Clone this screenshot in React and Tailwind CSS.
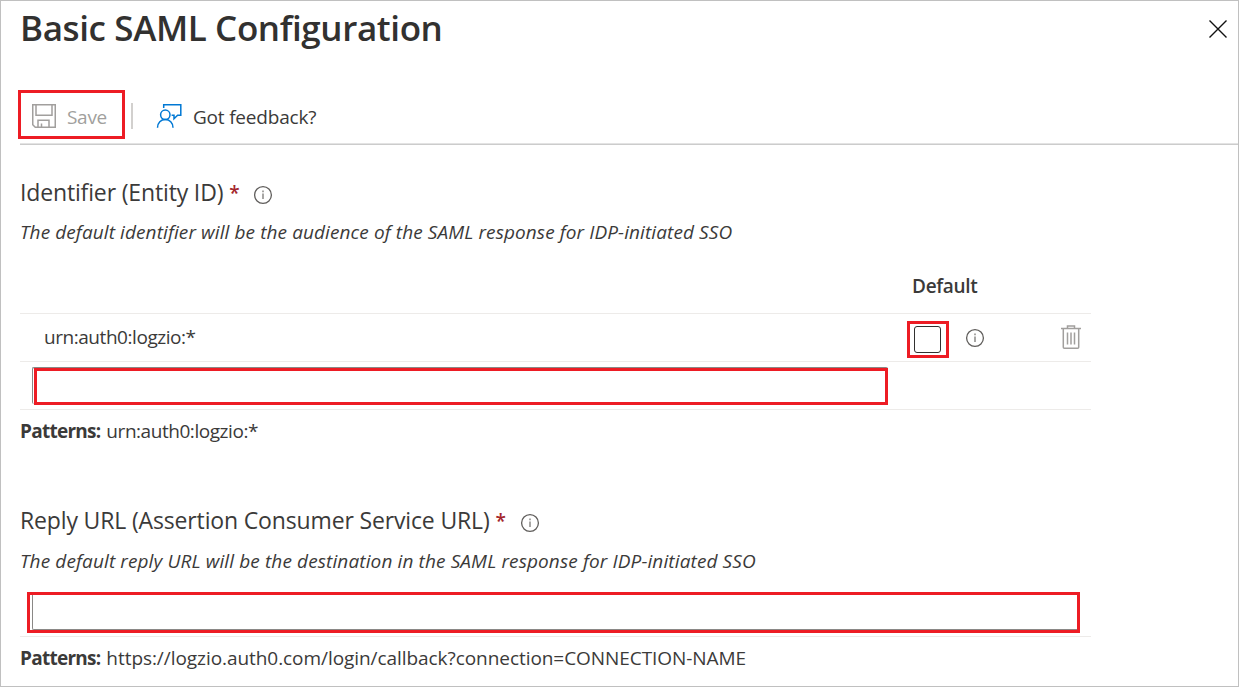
function InfoIcon({ className }) {
  return (
    <svg className={className} width="20" height="20" viewBox="0 0 20 20" fill="none">
      <circle cx="10" cy="10" r="8.4" stroke="#605e5c" strokeWidth="1.3" />
      <path d="M10 8.6V14" stroke="#8a8886" strokeWidth="1.5" />
      <path d="M10 5.6V7.2" stroke="#8a8886" strokeWidth="1.5" />
    </svg>
  );
}

function SaveIcon() {
  return (
    <svg className="mt-[2px] shrink-0" width="24" height="24" viewBox="0 0 24 24" fill="none" stroke="#a19f9d" strokeWidth="1.5">
      <path d="M0.75 0.75H23.25V23.25H3.25L0.75 20.75Z" />
      <path d="M4 1V11.25H20V1" />
      <path d="M6 23V16.25H17V23" />
      <path d="M9.5 23V19.5" />
    </svg>
  );
}

function FeedbackIcon() {
  return (
    <svg className="mt-[2px] shrink-0" width="26" height="26" viewBox="0 0 26 26" fill="none" stroke="#0078d4" strokeWidth="1.5">
      <path d="M7.7 5V1.7H24.8V12.3H21.6L18 15.8V12.3H15.6" />
      <circle cx="9.3" cy="11.8" r="4.7" />
      <path d="M1.5 24.8C1.5 19.8 5 16.6 9.3 16.6S17 19.8 17 24.8" />
    </svg>
  );
}

function TrashIcon() {
  return (
    <svg width="20" height="24" viewBox="0 0 20 24" fill="none" stroke="#a19f9d" strokeWidth="1.5">
      <path d="M0 3.5H20" />
      <path d="M6.5 3V0.9H13.5V3" />
      <path d="M2.3 4V22.2Q2.3 23.2 3.3 23.2H16.7Q17.7 23.2 17.7 22.2V4" />
      <path d="M6.5 7.5V19.5M10 7.5V19.5M13.5 7.5V19.5" />
    </svg>
  );
}

function CloseIcon() {
  return (
    <svg width="18" height="18" viewBox="0 0 18 18" stroke="#111" strokeWidth="1.4">
      <path d="M0.5 0.5L17.5 17.5M17.5 0.5L0.5 17.5" />
    </svg>
  );
}

function Heading({ children }) {
  return (
    <div className="flex h-[40px] items-center text-[23px] tracking-[-0.15px]">
      <span className="-mt-px">{children}</span>
      <span className="ml-[6px] w-[10px] text-[19px] font-semibold text-[#a4262c]">*</span>
      <InfoIcon className="mt-[3px] ml-[14px]" />
    </div>
  );
}

function Patterns({ children }) {
  return (
    <p className="flex h-[43px] items-center">
      <b className="mr-[6px] tracking-[-0.75px]">Patterns:</b>
      {children}
    </p>
  );
}

export default function App() {
  return (
    <main className="flex h-[687px] w-[1239px] flex-col overflow-hidden border border-[#c0c0c0] bg-white pl-[19px] font-['Open_Sans','Noto_Sans',sans-serif] text-[19px] whitespace-nowrap text-[#3b3a39]">
      <header className="flex h-[56px] items-center justify-between pr-[11px]">
        <h1 className="-mt-[2px] text-[35px] font-semibold tracking-[-0.39px] text-[#323130]">Basic SAML Configuration</h1>
        <button aria-label="Close"><CloseIcon /></button>
      </header>

      <div className="mt-[33px] flex h-[49px] items-center">
        <button className="-ml-[2px] flex h-[49px] w-[107px] shrink-0 items-center border-[3px] border-[#ed1c24] pl-[11px] text-[#a19f9d]">
          <SaveIcon />
          <span className="mt-[5px] ml-[11px] tracking-[-0.3px]">Save</span>
        </button>
        <div className="mt-[2px] ml-[6px] h-[26px] w-[2px] bg-[#d2d0ce]" />
        <button className="ml-[23px] flex items-center">
          <FeedbackIcon />
          <span className="mt-[5px] ml-[11px] tracking-[-0.2px]">Got feedback?</span>
        </button>
      </div>
      <div className="mt-[4px] h-[2px] shrink-0 border-t border-b border-t-[#e3e3e3] border-b-[#cccccc]" />

      <section className="mt-[28px]">
        <Heading>Identifier (Entity ID)</Heading>
        <p className="flex h-[38px] items-center tracking-[0.1px] italic">The default identifier will be the audience of the SAML response for IDP-initiated SSO</p>
        <div className="w-[1071px]">
          <div className="flex h-[63px] items-center border-b border-[#edebe9] pt-[9px] pl-[892px] font-semibold tracking-[-0.3px]">Default</div>
          <div className="flex h-[48px] items-center border-b border-[#edebe9] pl-[24px]">
            <span className="w-[863px] tracking-[-0.45px]">urn:auth0:logzio:*</span>
            <div className="mt-[3px] flex h-[37px] w-[42px] border-[3px] border-[#ed1c24] pt-[2px] pl-[4px]">
              <div className="h-[27px] w-[27px] rounded-[3px] border border-[#323130]" />
            </div>
            <InfoIcon className="ml-[16px]" />
            <button className="mb-[2px] ml-[76px]" aria-label="Delete"><TrashIcon /></button>
          </div>
          <div className="flex h-[48px] border-b border-[#edebe9] pt-[5px] pl-[12px]">
            <div className="h-[37px] w-[856px] rounded-[2px] border-t border-l border-[#8a8886] pl-px">
              <div className="h-[37px] w-[854px] border-[3px] border-[#ed1c24]" />
            </div>
          </div>
        </div>
        <Patterns><span className="tracking-[-0.45px]">urn:auth0:logzio:*</span></Patterns>
      </section>

      <section className="mt-[48px]">
        <Heading>Reply URL (Assertion Consumer Service URL)</Heading>
        <p className="flex h-[40px] items-center tracking-[0.12px] italic">The default reply URL will be the destination in the SAML response for IDP-initiated SSO</p>
        <div className="h-[56px] w-[1071px] border-b border-[#edebe9] pt-[11px] pl-[7px]">
          <div className="h-[41px] w-[1053px] border-[3px] border-[#ed1c24] pl-[2px]">
            <div className="h-[35px] rounded-bl-[2px] border-b border-l border-[#8a8886]" />
          </div>
        </div>
        <Patterns><span className="tracking-[-0.06px]">https://logzio.auth0.com/login/callback?connection=CONNECTION-NAME</span></Patterns>
      </section>
    </main>
  );
}
